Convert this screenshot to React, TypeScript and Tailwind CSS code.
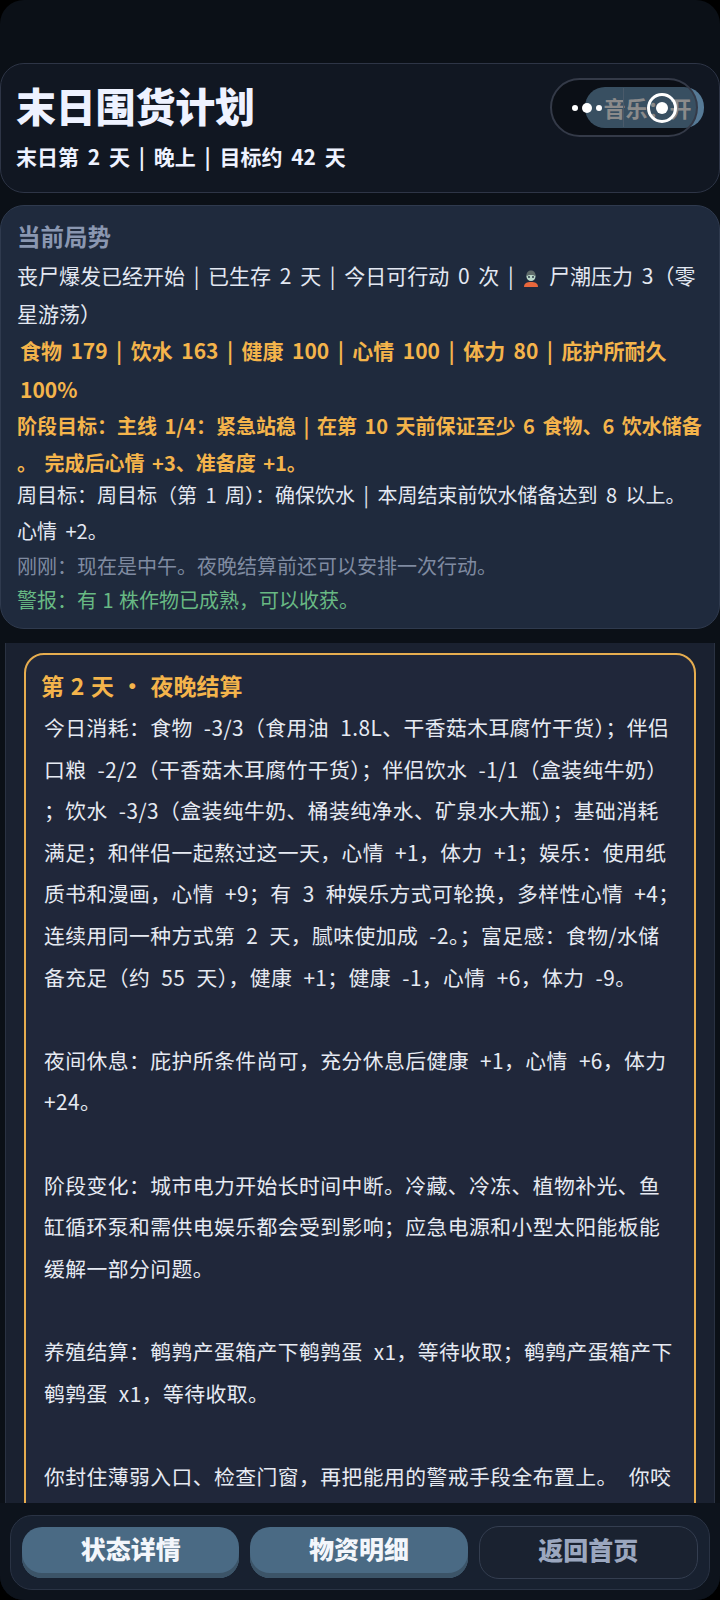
import React from "react";

const logLines = [
  "今日消耗：食物 -3/3（食用油 1.8L、干香菇木耳腐竹干货）；伴侣",
  "口粮 -2/2（干香菇木耳腐竹干货）；伴侣饮水 -1/1（盒装纯牛奶）",
  "；饮水 -3/3（盒装纯牛奶、桶装纯净水、矿泉水大瓶）；基础消耗",
  "满足；和伴侣一起熬过这一天，心情 +1，体力 +1；娱乐：使用纸",
  "质书和漫画，心情 +9；有 3 种娱乐方式可轮换，多样性心情 +4；",
  "连续用同一种方式第 2 天，腻味使加成 -2。；富足感：食物/水储",
  "备充足（约 55 天），健康 +1；健康 -1，心情 +6，体力 -9。",
  "",
  "夜间休息：庇护所条件尚可，充分休息后健康 +1，心情 +6，体力",
  "+24。",
  "",
  "阶段变化：城市电力开始长时间中断。冷藏、冷冻、植物补光、鱼",
  "缸循环泵和需供电娱乐都会受到影响；应急电源和小型太阳能板能",
  "缓解一部分问题。",
  "",
  "养殖结算：鹌鹑产蛋箱产下鹌鹑蛋 x1，等待收取；鹌鹑产蛋箱产下",
  "鹌鹑蛋 x1，等待收取。",
  "",
  "你封住薄弱入口、检查门窗，再把能用的警戒手段全布置上。 你咬",
];

const ZombieIcon = () => (
  <svg width="18" height="17" viewBox="0 0 18 17" className="inline-block align-[-3px]">
    <path d="M2 17c0-4 3-5 7-5s7 1 7 5z" fill="#e8673c" />
    <circle cx="9" cy="6.5" r="4.5" fill="#b9d6c8" />
    <path d="M4.5 6c0-4 2-5.5 4.500-5.500s4.500 1.500 4.500 5.500c-2-1.500-7-1.500-9 0z" fill="#5f6b6a" />
    <circle cx="7" cy="7" r="0.9" fill="#1f2a3d" />
    <circle cx="11" cy="7" r="0.9" fill="#1f2a3d" />
  </svg>
);

const App: React.FC = () => {
  return (
    <div
      className="h-[1600px] w-[720px] overflow-hidden bg-black"
      style={{ fontFamily: '"Noto Sans CJK SC", "Noto Sans", sans-serif' }}
    >
      <div className="relative flex h-full flex-col overflow-hidden rounded-[24px] bg-[#0b1017]">
        {/* Header */}
        <div className="h-[63px] shrink-0" />
        <div className="relative h-[130px] shrink-0 rounded-[24px] border border-[#2e3546] bg-[#111722] px-[15px]">
          <h1 className="mt-[15px] text-[40px] font-black leading-[52px] tracking-[-0.2px] text-[#eef2ff]">
            末日围货计划
          </h1>
          <p className="mt-[11px] text-[21px] font-bold leading-[28px] text-[#eef2ff] whitespace-pre [word-spacing:4px]">
            末日第 2 天 | 晚上 | 目标约 42 天
          </p>
          {/* Music toggle, sits under the capsule */}
          <div className="absolute left-[584px] top-[23px] flex h-[41px] w-[119px] items-center justify-center rounded-[20px] bg-[#567a96] pl-[6px] text-[22px] font-bold text-[#d6d6d6]">
            音乐：开
          </div>
          <div className="absolute left-[549px] top-[14px] flex h-[59px] w-[148px] items-center rounded-full border-2 border-[#343a48] bg-black/35">
            <div className="ml-[20px] flex items-center gap-[4px]">
              <span className="h-[6px] w-[6px] rounded-full bg-white" />
              <span className="h-[10px] w-[10px] rounded-full bg-white" />
              <span className="h-[6px] w-[6px] rounded-full bg-white" />
            </div>
            <div className="ml-[21px] h-[39px] w-px bg-[#4a5a6a]" />
            <div className="ml-[23px] flex h-[30px] w-[30px] items-center justify-center rounded-full border-[3px] border-white">
              <span className="h-[12px] w-[12px] rounded-full bg-white" />
            </div>
          </div>
        </div>

        {/* Current situation */}
        <div className="mt-[12px] h-[424px] shrink-0 rounded-[24px] border border-[#2f3a4e] bg-[#1f2a3d] px-[16px] pt-[13px] whitespace-pre">
          <h2 className="text-[23.500px] font-bold leading-[34px] text-[#8a97b1]">当前局势</h2>
          <p className="mt-[3px] text-[21px] leading-[38px] text-[#e3e8f2] [word-spacing:4px]">
            丧尸爆发已经开始 | 已生存 2 天 | 今日可行动 0 次 | <ZombieIcon /> 尸潮压力 3（零
            {"\n"}星游荡）
          </p>
          <p className="-mt-[1px] pl-[3px] text-[21px] font-bold leading-[39px] text-[#f4b44b] [word-spacing:3.700px]">
            食物 179 | 饮水 163 | 健康 100 | 心情 100 | 体力 80 | 庇护所耐久{"\n"}100%
          </p>
          <p className="-mt-[2px] text-[20px] font-bold leading-[37px] text-[#f4b44b] [word-spacing:3px]">
            阶段目标：主线 1/4：紧急站稳 | 在第 10 天前保证至少 6 食物、6 饮水储备{"\n"}。 完成后心情 +3、准备度 +1。
          </p>
          <p className="-mt-[4px] text-[20px] leading-[36px] text-[#e3e8f2] [word-spacing:4px]">
            周目标：周目标（第 1 周）：确保饮水 | 本周结束前饮水储备达到 8 以上。{"\n"}心情 +2。
          </p>
          <p className="-mt-[1px] text-[20px] leading-[35px] text-[#7f8ba1]">
            刚刚：现在是中午。夜晚结算前还可以安排一次行动。
          </p>
          <p className="text-[20px] leading-[34px] text-[#68b984] [word-spacing:1px]">警报：有 1 株作物已成熟，可以收获。</p>
        </div>

        {/* Scrolling log */}
        <div className="mx-[5px] mt-[14px] min-h-0 flex-1 overflow-hidden border-x border-[#2a3242] bg-[#1a2130] px-[18px] pt-[10px]">
          <div className="h-[1000px] rounded-t-[20px] border-2 border-[#e6ad4f] bg-[#20273a] px-[15px] pt-[12px]">
            <h3 className="text-[23px] font-bold leading-[36px] text-[#f4b44b] [word-spacing:1.500px]">第 2 天 · 夜晚结算</h3>
            <div className="mt-[4px] pl-[3px] text-[20.800px] leading-[41.600px] tracking-[0.45px] text-[#e6eaf2] whitespace-pre [word-spacing:6px]">
              {logLines.map((line, i) => (
                <div key={i} className="h-[41.600px]">
                  {line}
                </div>
              ))}
            </div>
          </div>
        </div>

        {/* Bottom nav */}
        <div className="h-[97px] shrink-0 bg-[#0d131c] px-[10px] pt-[12px]">
          <div className="flex h-[75px] items-center gap-[11px] rounded-[22px] border border-[#2a3344] bg-[#182130] px-[11px]">
            <button className="h-[51px] flex-1 rounded-[20px] bg-[#4a6a84] pb-[8px] shadow-[inset_0_-5px_0_#3c5468] text-[25px] font-black leading-none text-[#f3f6fb]">
              状态详情
            </button>
            <button className="h-[51px] flex-1 rounded-[20px] bg-[#4a6a84] pb-[8px] shadow-[inset_0_-5px_0_#3c5468] text-[25px] font-black leading-none text-[#f3f6fb]">
              物资明细
            </button>
            <button className="h-[53px] flex-1 rounded-[20px] border border-[#343e50] bg-[#1a2230] pb-[6px] text-[25px] font-black leading-none text-[#9ba7bf]">
              返回首页
            </button>
          </div>
        </div>
      </div>
    </div>
  );
};

export default App;
